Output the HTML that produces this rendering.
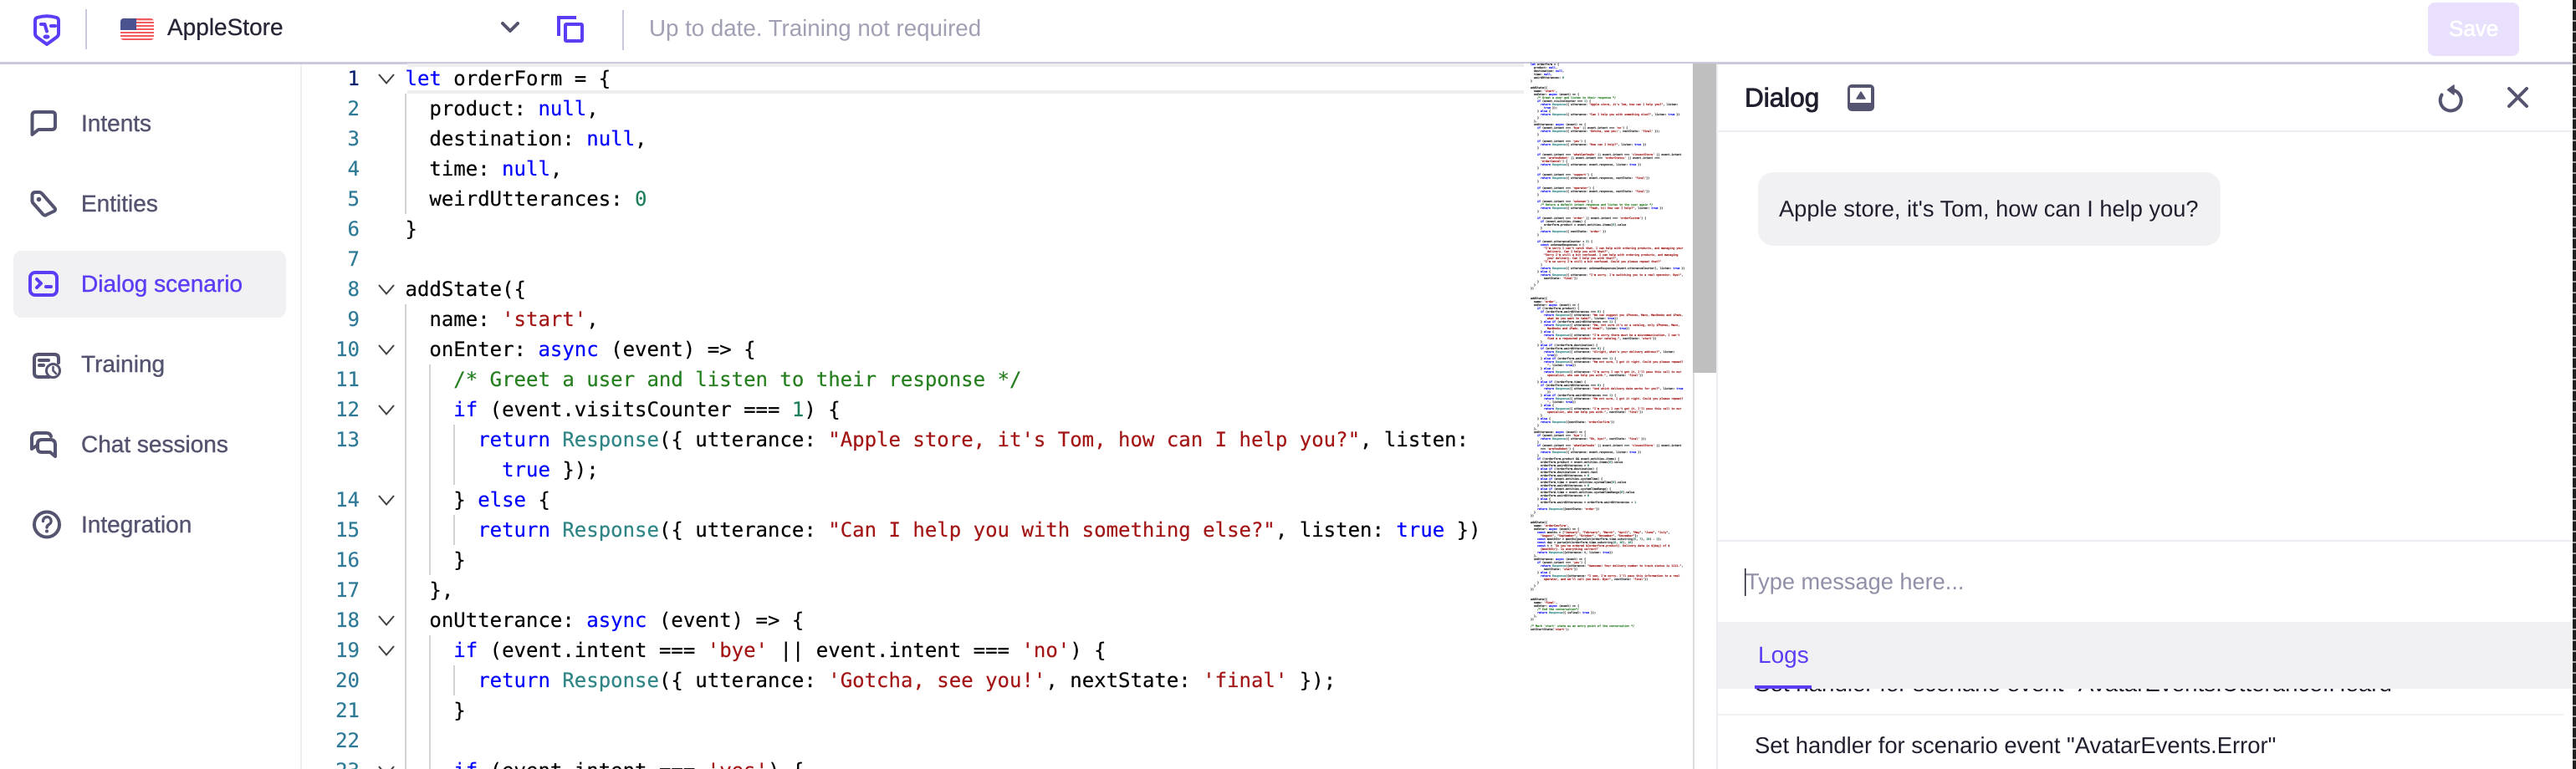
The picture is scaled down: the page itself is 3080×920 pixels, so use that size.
<!DOCTYPE html>
<html lang="en">
<head>
<meta charset="utf-8">
<title>Dialog scenario</title>
<style>
html,body{margin:0;padding:0;width:3080px;height:920px;overflow:hidden;background:#fff;text-rendering:geometricPrecision}
svg.ui{position:absolute;left:0;top:0}
svg text{font-family:"Liberation Sans",sans-serif;font-size:28px}
.mono{position:absolute;margin:0;font-family:"DejaVu Sans Mono",monospace;white-space:pre;color:#000}
#nums{left:380px;width:50px;top:76px;height:844px;overflow:hidden;font-size:24px;line-height:36px;text-align:right;color:#2f7a96;-webkit-text-stroke:.2px currentColor}
#nums span{color:#0b216f}
#code{left:484.5px;top:76px;width:1340px;height:844px;overflow:hidden;font-size:24px;line-height:36px;-webkit-text-stroke:.2px currentColor}
#mini{left:1830px;top:75px;width:194px;height:700px;overflow:hidden;font-size:3.33px;line-height:4px;color:#222;-webkit-text-stroke:.22px currentColor;filter:blur(.25px)}
.mono b{font-weight:400;color:#0000ff}
.mono i{font-style:normal;color:#a31515}
.mono u{text-decoration:none;color:#2f8585}
.mono s{text-decoration:none;color:#267f1f}
.mono em{font-style:normal;color:#1f7f5a}
#edge{position:absolute;left:3076px;top:0;width:4px;height:920px;background:repeating-linear-gradient(#1f1f1f 0,#1f1f1f 11px,#aaa 11px,#aaa 13px)}
</style>
</head>
<body>
<svg class="ui" width="3080" height="920" viewBox="0 0 3080 920" xmlns="http://www.w3.org/2000/svg">
  <!-- top line -->
  <rect x="0" y="74" width="3076" height="3" fill="#cacadc"/>
  <!-- logo -->
  <g fill="none" stroke="#5b3df5" stroke-width="4" stroke-linecap="round" stroke-linejoin="round">
    <path d="M44.5 21 Q56 17.5 67.5 21 Q70 21.8 70 24.5 V40 Q70 42.8 68 44.2 L56 53 L44 44.2 Q42 42.8 42 40 V24.5 Q42 21.8 44.5 21Z"/>
    <path d="M49 29 H53.5 L56 37.5"/>
    <path d="M61 31 H66"/>
  </g>
  <ellipse cx="55.5" cy="44" rx="4" ry="2.6" fill="#5b3df5"/>
  <rect x="102" y="11" width="2" height="48" fill="#c8c8da"/>
  <!-- flag -->
  <g>
    <clipPath id="fl"><rect x="144" y="22" width="40" height="26" rx="4"/></clipPath>
    <g clip-path="url(#fl)">
      <rect x="144" y="22" width="40" height="26" fill="#fff"/>
      <g fill="#f05c5f">
        <rect x="144" y="22" width="40" height="2.4"/><rect x="144" y="26" width="40" height="2"/>
        <rect x="144" y="30" width="40" height="2"/><rect x="144" y="34" width="40" height="2"/>
        <rect x="144" y="38" width="40" height="2"/><rect x="144" y="42" width="40" height="2"/>
        <rect x="144" y="46" width="40" height="2"/>
      </g>
      <rect x="144" y="22" width="19" height="14" fill="#4a5390"/>
    </g>
  </g>
  <text x="200" y="42" fill="#262636" style="stroke:#262636;stroke-width:.3px">AppleStore</text>
  <path d="M601 28 L610 37 L619 28" fill="none" stroke="#545470" stroke-width="4" stroke-linecap="round" stroke-linejoin="round"/>
  <!-- copy icon -->
  <g fill="none" stroke="#5b3df5" stroke-width="4">
    <rect x="676" y="29" width="20" height="20" rx="1"/>
    <path d="M668 43 V21 H689"/>
  </g>
  <rect x="744" y="12" width="2" height="48" fill="#c8c8da"/>
  <text x="776" y="43" fill="#a0a0b4" style="font-size:27.7px">Up to date. Training not required</text>
  <rect x="2903" y="3" width="109" height="64" rx="8" fill="#e8e0fc"/>
  <text x="2928" y="43" fill="#fff" style="font-size:26px;stroke:#fff;stroke-width:.7px">Save</text>

  <!-- sidebar -->
  <rect x="359" y="77" width="2" height="843" fill="#ededf3"/>
  <rect x="16" y="300" width="326" height="80" rx="10" fill="#f1f1f4"/>
  <g style="stroke:#545470;stroke-width:.4px" fill="#545470">
    <text x="97" y="157">Intents</text>
    <text x="97" y="253">Entities</text>
    <text x="97" y="445">Training</text>
    <text x="97" y="541">Chat sessions</text>
    <text x="97" y="637">Integration</text>
  </g>
  <text x="97" y="349" fill="#5b3df5" style="stroke:#5b3df5;stroke-width:.4px">Dialog scenario</text>
  <g fill="none" stroke="#545470" stroke-width="4" stroke-linecap="round" stroke-linejoin="round">
    <path d="M38.5 161 V138 Q38.5 134 42.5 134 H62 Q66 134 66 138 V151 Q66 155 62 155 H46 Z"/>
    <path d="M38.5 234 Q38.5 230 42.5 230 H46.5 Q49 230 50.5 232 L65.5 249 Q67 251 65 252.5 L55.5 257 Q53.5 258.5 51.5 256.5 L40 243.5 Q38.5 242 38.5 240Z"/>
    <path d="M59 451 H46 Q41 451 41 446 V429 Q41 424 46 424 H65 Q70 424 70 429 V434"/>
    <path d="M47 431 H58 M47 437 H52"/>
    <circle cx="63.5" cy="443.5" r="8" stroke-width="3"/>
    <path d="M63.5 439 V443.5 L67 447" stroke-width="2.5"/>
    <path d="M38 537 V524 Q38 518 44 518 H55 Q60 518 61 522 M38 537 L44 533"/>
    <path d="M50 526 H60 Q66 526 66 532 V546 L60 541 H50 Q45 541 45 536 V531 Q45 526 50 526Z"/>
    <circle cx="56" cy="627.5" r="15"/>
    <path d="M51.5 623.5 A4.8 4.8 0 1 1 58.5 627.5 Q56 629 56 631" stroke-width="3.4"/>
  </g>
  <circle cx="46.5" cy="238.5" r="2.8" fill="#545470"/>
  <circle cx="56" cy="635.5" r="2" fill="#545470"/>
  <g fill="none" stroke="#5b3df5" stroke-width="4" stroke-linecap="round" stroke-linejoin="round">
    <rect x="36" y="326" width="32" height="27" rx="6"/>
    <path d="M44 334 L49 339 L44 344"/>
    <path d="M55 343 H61"/>
  </g>

  <!-- editor chrome -->
  <rect x="487" y="76" width="1537" height="4" fill="#eeeeee"/>
  <rect x="487" y="108" width="1537" height="4" fill="#eeeeee"/>
  <rect x="1822" y="76" width="202" height="36" fill="#fff"/>
  <g fill="#d3d3d3">
    <rect x="484" y="112" width="2" height="144"/>
    <rect x="484" y="364" width="2" height="556"/>
    <rect x="513" y="436" width="2" height="252"/>
    <rect x="513" y="760" width="2" height="160"/>
    <rect x="542" y="508" width="2" height="72"/>
    <rect x="542" y="616" width="2" height="36"/>
    <rect x="542" y="796" width="2" height="36"/>
  </g>
  <g fill="none" stroke="#424242" stroke-width="2">
    <path d="M453 89 L462 99.5 L471 89"/>
    <path d="M453 341 L462 351.5 L471 341"/>
    <path d="M453 413 L462 423.5 L471 413"/>
    <path d="M453 485 L462 495.5 L471 485"/>
    <path d="M453 593 L462 603.5 L471 593"/>
    <path d="M453 737 L462 747.5 L471 737"/>
    <path d="M453 773 L462 783.5 L471 773"/>
    <path d="M453 917 L462 927.5 L471 917"/>
  </g>
  <rect x="2024" y="76" width="2" height="844" fill="#dcdcdc"/>
  <rect x="2024" y="76" width="28" height="370" fill="#bfbfbf"/>

  <!-- dialog panel -->
  <rect x="2052" y="77" width="2" height="843" fill="#ececf3"/>
  <text x="2086" y="127.5" fill="#1f1f2e" style="font-size:31.5px;stroke:#1f1f2e;stroke-width:.9px">Dialog</text>
  <rect x="2209" y="101" width="32" height="32" rx="5" fill="#545470"/>
  <rect x="2212" y="105" width="25" height="18" fill="#fff"/>
  <path d="M2225 110 L2230 118 H2220 Z" fill="#545470" stroke="#545470" stroke-width="1.5" stroke-linejoin="round"/>
  <g fill="none" stroke="#545470" stroke-width="4" stroke-linecap="round">
    <path d="M2931 107.5 A12.5 12.5 0 1 1 2919.5 113.5"/>
    <path d="M3000 106 L3021 127 M3021 106 L3000 127"/>
  </g>
  <path d="M2934 102 L2926.5 107.5 L2934 113 Z" fill="#545470" stroke="#545470" stroke-width="1.5" stroke-linejoin="round"/>
  <rect x="2054" y="156" width="1022" height="2" fill="#ececf3"/>
  <rect x="2102" y="206" width="553" height="88" rx="18" fill="#f1f1f4"/>
  <text x="2127" y="259" fill="#1f1f2e" style="font-size:27.25px">Apple store, it's Tom, how can I help you?</text>
  <rect x="2054" y="646" width="1022" height="2" fill="#ececf3"/>
  <rect x="2086" y="680" width="1.5" height="33" fill="#1f1f2e"/>
  <text x="2087" y="705" fill="#9090a8" style="font-size:27.2px">Type message here...</text>

  <text x="2098" y="827" fill="#1f1f2e" style="font-size:27.7px">Set handler for scenario event "AvatarEvents.Utterance.Heard"</text>
  <rect x="2054" y="744" width="1022" height="80" fill="#f1f1f4"/>
  <text x="2102" y="793" fill="#5b3df5">Logs</text>
  <rect x="2098" y="820" width="68" height="4" fill="#5b3df5"/>
  <rect x="2054" y="854" width="1011" height="2" fill="#f1f1f4"/>
  <text x="2098" y="901" fill="#1f1f2e" style="font-size:27.4px">Set handler for scenario event "AvatarEvents.Error"</text>
</svg>

<pre class="mono" id="nums"><span>1</span>
2
3
4
5
6
7
8
9
10
11
12
13

14
15
16
17
18
19
20
21
22
23</pre>

<pre class="mono" id="code"><b>let</b> orderForm = {
  product: <b>null</b>,
  destination: <b>null</b>,
  time: <b>null</b>,
  weirdUtterances: <em>0</em>
}

addState({
  name: <i>'start'</i>,
  onEnter: <b>async</b> (event) =&gt; {
    <s>/* Greet a user and listen to their response */</s>
    <b>if</b> (event.visitsCounter === <em>1</em>) {
      <b>return</b> <u>Response</u>({ utterance: <i>"Apple store, it's Tom, how can I help you?"</i>, listen:
        <b>true</b> });
    } <b>else</b> {
      <b>return</b> <u>Response</u>({ utterance: <i>"Can I help you with something else?"</i>, listen: <b>true</b> })
    }
  },
  onUtterance: <b>async</b> (event) =&gt; {
    <b>if</b> (event.intent === <i>'bye'</i> || event.intent === <i>'no'</i>) {
      <b>return</b> <u>Response</u>({ utterance: <i>'Gotcha, see you!'</i>, nextState: <i>'final'</i> });
    }

    <b>if</b> (event.intent === <i>'yes'</i>) {</pre>

<pre class="mono" id="mini"><b>let</b> orderForm = {
  product: <b>null</b>,
  destination: <b>null</b>,
  time: <b>null</b>,
  weirdUtterances: <em>0</em>
}

addState({
  name: <i>'start'</i>,
  onEnter: <b>async</b> (event) =&gt; {
    <s>/* Greet a user and listen to their response */</s>
    <b>if</b> (event.visitsCounter === <em>1</em>) {
      <b>return</b> <u>Response</u>({ utterance: <i>"Apple store, it's Tom, how can I help you?"</i>, listen:
        <b>true</b> });
    } <b>else</b> {
      <b>return</b> <u>Response</u>({ utterance: <i>"Can I help you with something else?"</i>, listen: <b>true</b> })
    }
  },
  onUtterance: <b>async</b> (event) =&gt; {
    <b>if</b> (event.intent === <i>'bye'</i> || event.intent === <i>'no'</i>) {
      <b>return</b> <u>Response</u>({ utterance: <i>'Gotcha, see you!'</i>, nextState: <i>'final'</i> });
    }

    <b>if</b> (event.intent === <i>'yes'</i>) {
      <b>return</b> <u>Response</u>({ utterance: <i>"How can I help?"</i>, listen: <b>true</b> })
    }

    <b>if</b> (event.intent === <i>'whatCanYouDo'</i> || event.intent === <i>'closestStore'</i> || event.intent
      === <i>'areYouRobot'</i> || event.intent === <i>'orderStatus'</i> || event.intent ===
      <i>'orderCancel'</i>) {
      <b>return</b> <u>Response</u>({ utterance: event.response, listen: <b>true</b> })
    }

    <b>if</b> (event.intent === <i>'support'</i>) {
      <b>return</b> <u>Response</u>({ utterance: event.response, nextState: <i>'final'</i>})
    }

    <b>if</b> (event.intent === <i>'operator'</i>) {
      <b>return</b> <u>Response</u>({ utterance: event.response, nextState: <i>'final'</i>})
    }

    <b>if</b> (event.intent === <i>'unknown'</i>) {
      <s>/* Return a default intent response and listen to the user again */</s>
      <b>return</b> <u>Response</u>({ utterance: <i>"Yeah, hi! How can I help?"</i>, listen: <b>true</b> })
    }

    <b>if</b> (event.intent === <i>'order'</i> || event.intent === <i>'orderCustom'</i>) {
      <b>if</b> (event.entities.items) {
        orderForm.product = event.entities.items[<em>0</em>].value
      }
      <b>return</b> <u>Response</u>({ nextState: <i>'order'</i> })
    }

    <b>if</b> (event.utteranceCounter &lt; <em>3</em>) {
      <b>const</b> unknownResponses = [
        <i>"I'm sorry I can't catch that. I can help with ordering products, and managing your</i>
          <i>delivery. Can I help you with that?"</i>,
        <i>"Sorry I'm still a bit confused. I can help with ordering products, and managing</i>
          <i>your delivery. Can I help you with that?"</i>,
        <i>"I'm so sorry I'm still a bit confused. Could you please repeat that?"</i>
      ]
      <b>return</b> <u>Response</u>({ utterance: unknownResponses[event.utteranceCounter], listen: <b>true</b> })
    } <b>else</b> {
      <b>return</b> <u>Response</u>({ utterance: <i>"I'm sorry. I'm switching you to a real operator. Bye!"</i>,
        nextState: <i>'final'</i>})
    }
  }
})


addState({
  name: <i>'order'</i>,
  onEnter: <b>async</b> (event) =&gt; {
    <b>if</b> (!orderForm.product) {
      <b>if</b> (orderForm.weirdUtterances === <em>0</em>) {
        <b>return</b> <u>Response</u>({ utterance: <i>"We can suggest you iPhones, Macs, MacBooks and iPads,</i>
          <i>what do you want to take?"</i>, listen: <b>true</b>})
      } <b>else if</b> (orderForm.weirdUtterances === <em>1</em>) {
        <b>return</b> <u>Response</u>({ utterance: <i>"Hm, not sure it's on a catalog, only iPhones, Macs,</i>
          <i>MacBooks and iPads. Any of them?"</i>, listen: <b>true</b>})
      } <b>else</b> {
        <b>return</b> <u>Response</u>({ utterance: <i>"I'm sorry there must be a miscommunication, I can't</i>
          <i>find a a requested product in our catalog."</i>, nextState: <i>'start'</i>})
      }
    } <b>else if</b> (!orderForm.destination) {
      <b>if</b> (orderForm.weirdUtterances === <em>0</em>) {
        <b>return</b> <u>Response</u>({ utterance: <i>"Alright, what's your delivery address?"</i>, listen:
          <b>true</b>})
      } <b>else if</b> (orderForm.weirdUtterances === <em>1</em>) {
        <b>return</b> <u>Response</u>({ utterance: <i>"Hm not sure, I got it right. Could you please repeat?</i>
          <i>"</i>, listen: <b>true</b>})
      } <b>else</b> {
        <b>return</b> <u>Response</u>({ utterance: <i>"I'm sorry I can't get it, I'll pass this call to our</i>
          <i>specialist, who can help you with."</i>, nextState: <i>'final'</i>})
      }
    } <b>else if</b> (!orderForm.time) {
      <b>if</b> (orderForm.weirdUtterances === <em>0</em>) {
        <b>return</b> <u>Response</u>({ utterance: <i>"And which delivery date works for you?"</i>, listen: <b>true</b>
          })
      } <b>else if</b> (orderForm.weirdUtterances === <em>1</em>) {
        <b>return</b> <u>Response</u>({ utterance: <i>"Hm not sure, I got it right. Could you please repeat?</i>
          <i>"</i>, listen: <b>true</b>})
      } <b>else</b> {
        <b>return</b> <u>Response</u>({ utterance: <i>"I'm sorry I can't get it, I'll pass this call to our</i>
          <i>specialist, who can help you with."</i>, nextState: <i>'final'</i>})
      }
    } <b>else</b> {
      <b>return</b> <u>Response</u>({nextState: <i>'orderConfirm'</i>})
    }
  },
  onUtterance: <b>async</b> (event) =&gt; {
    <b>if</b> (event.intent === <i>'bye'</i>) {
      <b>return</b> <u>Response</u>({ utterance: <i>"Ok, bye!"</i>, nextState: <i>'final'</i> });
    }
    <b>if</b> (event.intent === <i>'whatCanYouDo'</i> || event.intent === <i>'closestStore'</i> || event.intent
      === <i>'areYouRobot'</i>) {
      <b>return</b> <u>Response</u>({ utterance: event.response, listen: <b>true</b> })
    }
    <b>if</b> (!orderForm.product &amp;&amp; event.entities.items) {
      orderForm.product = event.entities.items[<em>0</em>].value
      orderForm.weirdUtterances = <em>0</em>
    } <b>else if</b> (!orderForm.destination) {
      orderForm.destination = event.text
      orderForm.weirdUtterances = <em>0</em>
    } <b>else if</b> (event.entities.systemTime) {
      orderForm.time = event.entities.systemTime[<em>0</em>].value
      orderForm.weirdUtterances = <em>0</em>
    } <b>else if</b> (event.entities.systemTimeRange) {
      orderForm.time = event.entities.systemTimeRange[<em>0</em>].value
      orderForm.weirdUtterances = <em>0</em>
    } <b>else</b> {
      orderForm.weirdUtterances = orderForm.weirdUtterances + <em>1</em>
    }
    <b>return</b> <u>Response</u>({nextState: <i>'order'</i>})
  }
})

addState({
  name: <i>'orderConfirm'</i>,
  onEnter: <b>async</b> (event) =&gt; {
    <b>const</b> months = [<i>"January"</i>, <i>"February"</i>, <i>"March"</i>, <i>"April"</i>, <i>"May"</i>, <i>"June"</i>, <i>"July"</i>,
      <i>"August"</i>, <i>"September"</i>, <i>"October"</i>, <i>"November"</i>, <i>"December"</i>];
    <b>const</b> monthStr = months[parseInt(orderForm.time.substring(<em>5</em>, <em>7</em>), <em>10</em>) - <em>1</em>];
    <b>const</b> day = parseInt(orderForm.time.substring(<em>8</em>, <em>10</em>), <em>10</em>)
    <b>const</b> t = <i>`So you've ordered ${orderForm.product}. Delivery date is ${day} of $</i>
      <i>{monthStr}. Is everything correct?`</i>
    <b>return</b> <u>Response</u>({utterance: t, listen: <b>true</b>})
  },
  onUtterance: <b>async</b> (event) =&gt; {
    <b>if</b> (event.intent === <i>'yes'</i>) {
      <b>return</b> <u>Response</u>({utterance: <i>"Awesome! Your delivery number to track status is 1111."</i>,
        nextState: <i>'start'</i>})
    } <b>else</b> {
      <b>return</b> <u>Response</u>({utterance: <i>"I see, I'm sorry. I'll pass this information to a real</i>
        <i>operator, and we'll call you back. Bye!"</i>, nextState: <i>'final'</i>})
    }
  }
})


addState({
  name: <i>'final'</i>,
  onEnter: <b>async</b> (event) =&gt; {
    <s>/* End the conversation*/</s>
    <b>return</b> <u>Response</u>({ isFinal: <b>true</b> });
  },
})

<s>/* Mark 'start' state as an entry point of the conversation */</s>
setStartState(<i>'start'</i>);</pre>

<div id="edge"></div>
</body>
</html>
